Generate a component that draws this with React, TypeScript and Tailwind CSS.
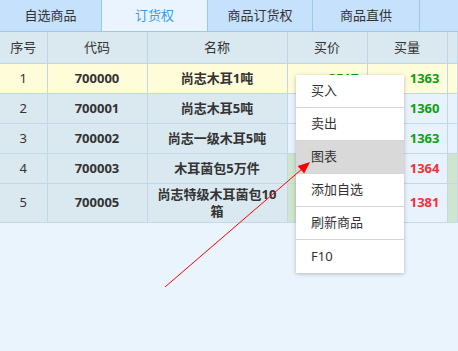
import React from "react";

const tabs = [
  { name: "自选商品", w: "w-[102px]" },
  { name: "订货权", w: "w-[106px]", active: true },
  { name: "商品订货权", w: "w-[105px]" },
  { name: "商品直供", w: "w-[107px]" },
];

const rows = [
  { no: 1, code: "700000", name: "尚志木耳1吨", price: "3517", qty: "1363", up: true, sel: true },
  { no: 2, code: "700001", name: "尚志木耳5吨", price: "3520", qty: "1360", up: true },
  { no: 3, code: "700002", name: "尚志一级木耳5吨", price: "3517", qty: "1363", up: true },
  { no: 4, code: "700003", name: "木耳菌包5万件", price: "3516", qty: "1364", up: false },
  { no: 5, code: "700005", name: "尚志特级木耳菌包10箱", price: "3519", qty: "1381", up: false },
];

const menuItems = ["买入", "卖出", "图表", "添加自选", "刷新商品", "F10"];

const App = () => {
  return (
    <div
      className="relative w-[458px] h-[351px] overflow-hidden bg-[#eaf4fd] text-[13px] text-[#333]"
      style={{ fontFamily: '"Noto Sans", "Noto Sans CJK SC", sans-serif' }}
    >
      <div className="flex h-[32px] bg-[#c5e1fb] border-b border-[#9cc8f0]">
        {tabs.map((t) => (
          <div
            key={t.name}
            className={`${t.w} flex items-center justify-center border-r border-[#9cc8f0] ${
              t.active ? "bg-[#eaf4fe] text-[#3a9ae8]" : ""
            }`}
          >
            {t.name}
          </div>
        ))}
      </div>

      <table className="table-fixed border-collapse w-[458px] leading-[17px]">
        <colgroup>
          <col className="w-[47px]" />
          <col className="w-[100px]" />
          <col className="w-[140px]" />
          <col className="w-[80px]" />
          <col className="w-[80px]" />
          <col />
        </colgroup>
        <thead>
          <tr className="h-[31px] bg-[#dae8f0]">
            {["序号", "代码", "名称", "买价", "买量", ""].map((h, i) => (
              <th
                key={i}
                className="font-normal text-center border-r border-b border-[#bed6ea] p-0"
              >
                {h}
              </th>
            ))}
          </tr>
        </thead>
        <tbody>
          {rows.map((r) => {
            const base = r.sel ? "bg-[#fffcd9]" : "bg-[#dae8f0]";
            const light = r.sel ? "bg-[#fffcd9]" : "bg-[#e8f2fc]";
            const mark = r.sel ? "bg-[#fffcd9]" : r.up ? "bg-[#e8f2fc]" : "bg-[#cfe5cf]";
            const color = r.up ? "text-[#10a010]" : "text-[#f5303a]";
            const cell = "border-r border-b border-[#c2d8ea] py-[2px]";
            return (
              <tr key={r.no} className="h-[30px]">
                <td className={`${cell} ${base} text-center`}>{r.no}</td>
                <td className={`${cell} ${base} text-center font-bold`}>{r.code}</td>
                <td className={`${cell} ${base} text-center font-bold px-[6px]`}>{r.name}</td>
                <td className={`${cell} ${mark} text-right font-bold pr-[8px] ${color}`}>{r.price}</td>
                <td className={`${cell} ${light} text-right font-bold pr-[7px] ${color}`}>{r.qty}</td>
                <td className={`${cell} ${mark}`}></td>
              </tr>
            );
          })}
        </tbody>
      </table>

      <div className="absolute left-[296px] top-[75px] w-[108px] bg-white shadow-[0_1px_4px_rgba(0,0,0,0.25)]">
        {menuItems.map((m, i) => (
          <div
            key={m}
            className={`h-[33px] flex items-center pl-[15px] ${
              i < menuItems.length - 1 ? "border-b border-[#d4d4d4]" : ""
            } ${m === "图表" ? "bg-[#d9d9d9]" : ""}`}
          >
            {m}
          </div>
        ))}
      </div>

      <svg
        className="absolute left-0 top-0 pointer-events-none"
        width="458"
        height="351"
        viewBox="0 0 458 351"
      >
        <line x1="165" y1="287" x2="302" y2="169" stroke="#ff0000" strokeWidth="1" />
        <polygon points="310,162 304.2,173.6 297.6,166" fill="#ff0000" />
      </svg>
    </div>
  );
};

export default App;
